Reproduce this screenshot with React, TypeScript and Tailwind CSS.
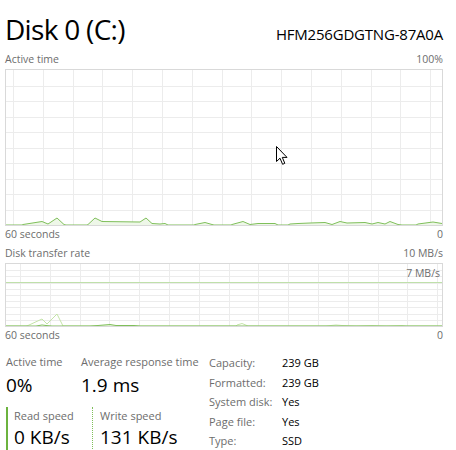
import React from "react"

const font = { fontFamily: '"Open Sans", "Noto Sans", sans-serif' }

const activePoints: [number, number][] = [
  [0, 155], [16, 155], [17, 154.5], [36, 151.5], [42, 154], [51, 148], [58, 154.5], [60, 155],
  [81, 155], [82, 154.5], [89, 148], [96, 151.5], [134, 152], [140, 148], [146, 153.5], [154, 154], [159, 153.5], [162, 155],
  [188, 155], [189, 154.5], [199, 152.5], [206, 154.5], [208, 155],
  [225, 155], [226, 154.5], [237, 151.5], [244, 154.5], [252, 153.5], [269, 153.5], [272, 155],
  [282, 155], [284, 154], [292, 153.5], [304, 153], [319, 152.5], [326, 154.5],
  [334, 151.5], [341, 153], [359, 152.5], [366, 154], [372, 152.5], [379, 154], [384, 151.5], [392, 154.5], [396, 155],
  [410, 155], [412, 154], [427, 152], [436, 153.5],
]

const writePoints: [number, number][] = [
  [0, 62], [20, 62], [22, 61.5], [36, 55], [41, 60], [51, 50], [57, 62], [60, 62],
  [230, 62], [231, 61], [236, 59.5], [242, 62],
  [320, 62], [330, 61], [336, 61.5], [350, 62], [366, 61.5], [380, 62], [396, 61.5], [400, 62], [436, 62],
]

const readPoints: [number, number][] = [
  [0, 62], [30, 62], [36, 61], [40, 61.5], [46, 62], [84, 62], [92, 61.5], [104, 60.5], [110, 61.5], [128, 61.5], [134, 62], [436, 62],
]

function toStr(p: [number, number][]) {
  return p.map(([x, y]) => `${x},${y}`).join(" ")
}

function Grid({ w, h, rows, offset }: { w: number; h: number; rows: number; offset: number }) {
  const vs: number[] = []
  for (let x = offset; x < w; x += 29.8) vs.push(Math.round(x) + 0.5)
  const hs: number[] = []
  for (let i = 1; i < rows; i++) hs.push(Math.round((h / rows) * i) + 0.5)
  return (
    <g stroke="#ececec" strokeWidth="1">
      {vs.map((x) => (
        <line key={"v" + x} x1={x} y1={0} x2={x} y2={h} />
      ))}
      {hs.map((y) => (
        <line key={"h" + y} x1={0} y1={y} x2={w} y2={y} />
      ))}
    </g>
  )
}

function Cursor() {
  return (
    <svg className="absolute left-[276px] top-[146px]" width="13" height="20" viewBox="0 0 13 20">
      <path
        d="M0.5 0.5 L0.5 15.5 L4 12.2 L6.6 18.3 L8.8 17.3 L6.3 11.4 L11 11.4 Z"
        fill="#ffffff"
        stroke="#000000"
        strokeWidth="1"
      />
    </svg>
  )
}

export default function App() {
  return (
    <div className="relative w-[456px] h-[450px] overflow-hidden bg-white pl-[5px] pr-[13px] text-black" style={font}>
      <div className="flex items-baseline justify-between h-[50px] pt-[12px]">
        <span className="text-[28px] leading-[34px] tracking-[-0.7px]">Disk 0 (C:)</span>
        <span className="text-[15px] leading-[20px] tracking-[-0.2px]">HFM256GDGTNG-87A0A</span>
      </div>

      <div className="flex justify-between text-[10.5px] leading-[19px] text-[#6d6d6d]">
        <span>Active time</span>
        <span>100%</span>
      </div>
      <div className="border border-[#d9d9d9] h-[157px]">
        <svg width="436" height="155" className="block">
          <Grid w={436} h={155} rows={10} offset={7} />
          <polygon points={toStr([...activePoints, [436, 155], [0, 155]])} fill="#eef7e8" />
          <polyline points={toStr(activePoints)} fill="none" stroke="#7fbf5a" strokeWidth="1" />
        </svg>
      </div>
      <div className="flex justify-between text-[10.5px] leading-[16px] text-[#6d6d6d]">
        <span>60 seconds</span>
        <span>0</span>
      </div>

      <div className="flex justify-between text-[10.5px] leading-[19px] text-[#6d6d6d] mt-[2px]">
        <span>Disk transfer rate</span>
        <span>10 MB/s</span>
      </div>
      <div className="relative border border-[#d9d9d9] h-[64px]">
        <svg width="436" height="62" className="block">
          <Grid w={436} h={62} rows={10} offset={14} />
          <line x1="0" y1="18.5" x2="436" y2="18.5" stroke="#bfe0aa" strokeWidth="1" />
          <polyline points={toStr(writePoints)} fill="none" stroke="#c4e3a8" strokeWidth="1" />
          <polyline points={toStr(readPoints)} fill="none" stroke="#7fbf5a" strokeWidth="1" />
        </svg>
        <span className="absolute right-[2px] top-[1px] text-[10.5px] leading-[16px] text-[#6d6d6d]">7 MB/s</span>
      </div>
      <div className="flex justify-between text-[10.5px] leading-[16px] text-[#6d6d6d]">
        <span>60 seconds</span>
        <span>0</span>
      </div>

      <div className="flex items-start mt-[9px]">
        <div className="w-[204px] flex flex-col">
          <div className="flex">
            <div className="w-[76px] pl-[1px]">
              <div className="text-[11px] leading-[20px] text-[#6d6d6d]">Active time</div>
              <div className="text-[19px] leading-[26px]">0%</div>
            </div>
            <div className="whitespace-nowrap">
              <div className="text-[11px] leading-[20px] text-[#6d6d6d]">Average response time</div>
              <div className="text-[19px] leading-[26px]">1.9 ms</div>
            </div>
          </div>
          <div className="flex mt-[9px]">
            <div className="w-[86px] ml-[1px] border-l-2 border-[#6cb33f] pl-[6px] pb-[10px]">
              <div className="text-[11px] leading-[18px] text-[#6d6d6d]">Read speed</div>
              <div className="text-[19px] leading-[24px]">0 KB/s</div>
            </div>
            <div className="border-l border-dotted border-[#7fbf5a] pl-[7px] pb-[10px] whitespace-nowrap">
              <div className="text-[11px] leading-[18px] text-[#6d6d6d]">Write speed</div>
              <div className="text-[19px] leading-[24px]">131 KB/s</div>
            </div>
          </div>
        </div>
        <div className="grid grid-cols-[73px_auto] content-start text-[11px] leading-[19.5px] pt-[1px]">
          <span className="text-[#6d6d6d]">Capacity:</span>
          <span>239 GB</span>
          <span className="text-[#6d6d6d]">Formatted:</span>
          <span>239 GB</span>
          <span className="text-[#6d6d6d]">System disk:</span>
          <span>Yes</span>
          <span className="text-[#6d6d6d]">Page file:</span>
          <span>Yes</span>
          <span className="text-[#6d6d6d]">Type:</span>
          <span>SSD</span>
        </div>
      </div>

      <Cursor />
    </div>
  )
}
